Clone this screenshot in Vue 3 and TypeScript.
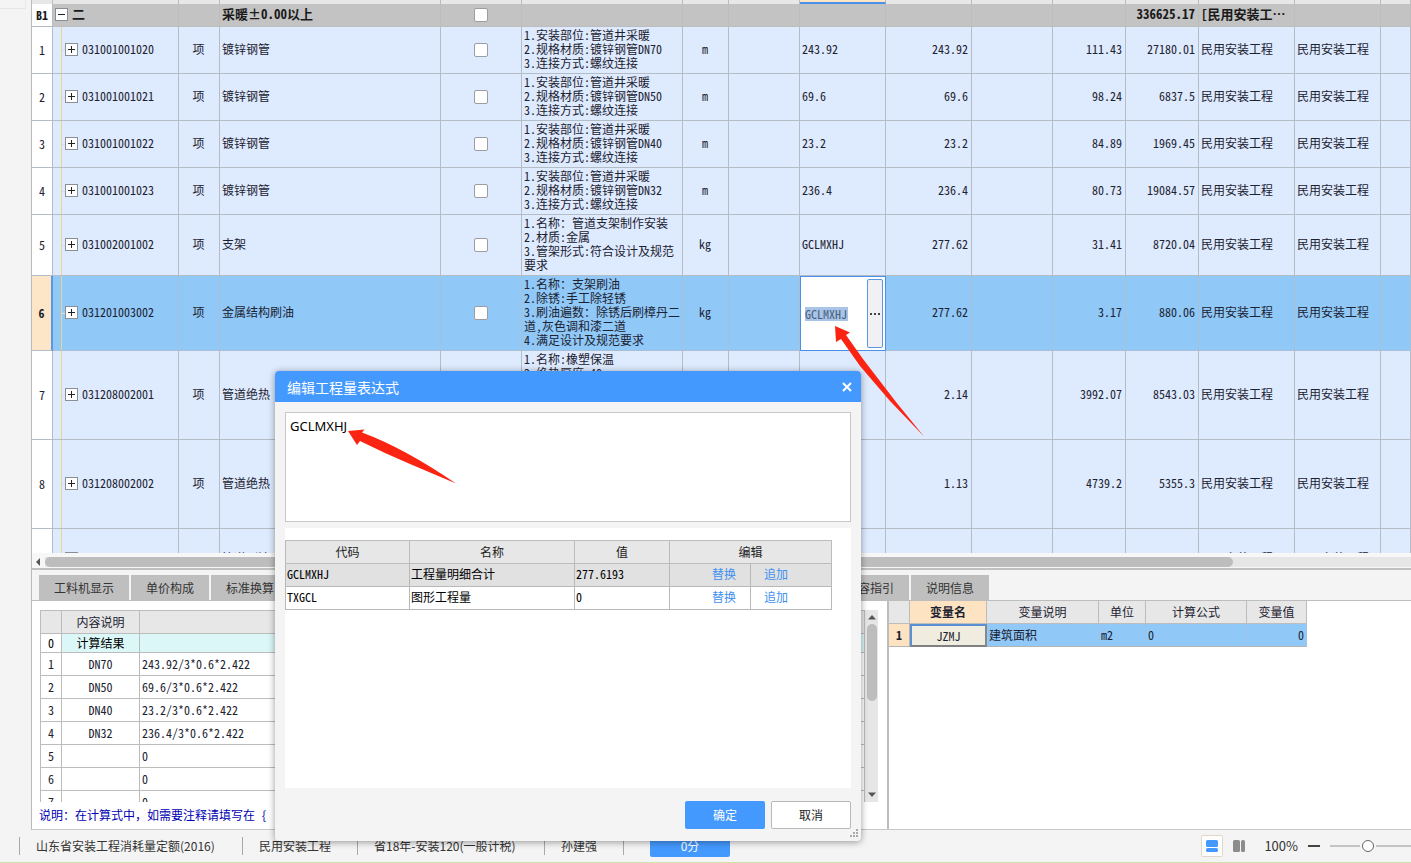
<script setup lang="ts">
import { ref } from 'vue'

interface Item {
  no: string
  code: string
  name: string
  desc: string[]
  unit: string
  expr: string
  qty: string
  price: string
  total: string
  size: string
  active?: boolean
}

const project = '民用安装工程'

const items: Item[] = [
  { no: '1', code: '031001001020', name: '镀锌钢管', desc: ['1.安装部位:管道井采暖', '2.规格材质:镀锌钢管DN70', '3.连接方式:螺纹连接'], unit: 'm', expr: '243.92', qty: '243.92', price: '111.43', total: '27180.01', size: 'h3' },
  { no: '2', code: '031001001021', name: '镀锌钢管', desc: ['1.安装部位:管道井采暖', '2.规格材质:镀锌钢管DN50', '3.连接方式:螺纹连接'], unit: 'm', expr: '69.6', qty: '69.6', price: '98.24', total: '6837.5', size: 'h3' },
  { no: '3', code: '031001001022', name: '镀锌钢管', desc: ['1.安装部位:管道井采暖', '2.规格材质:镀锌钢管DN40', '3.连接方式:螺纹连接'], unit: 'm', expr: '23.2', qty: '23.2', price: '84.89', total: '1969.45', size: 'h3' },
  { no: '4', code: '031001001023', name: '镀锌钢管', desc: ['1.安装部位:管道井采暖', '2.规格材质:镀锌钢管DN32', '3.连接方式:螺纹连接'], unit: 'm', expr: '236.4', qty: '236.4', price: '80.73', total: '19084.57', size: 'h3' },
  { no: '5', code: '031002001002', name: '支架', desc: ['1.名称：管道支架制作安装', '2.材质:金属', '3.管架形式:符合设计及规范', '要求'], unit: 'kg', expr: 'GCLMXHJ', qty: '277.62', price: '31.41', total: '8720.04', size: 'h4' },
  { no: '6', code: '031201003002', name: '金属结构刷油', desc: ['1.名称：支架刷油', '2.除锈:手工除轻锈', '3.刷油遍数：除锈后刷樟丹二', '道,灰色调和漆二道', '4.满足设计及规范要求'], unit: 'kg', expr: 'GCLMXHJ', qty: '277.62', price: '3.17', total: '880.06', size: 'h5', active: true },
  { no: '7', code: '031208002001', name: '管道绝热', desc: ['1.名称:橡塑保温', '2.绝热厚度:40'], unit: '', expr: '', qty: '2.14', price: '3992.07', total: '8543.03', size: 'h6' },
  { no: '8', code: '031208002002', name: '管道绝热', desc: [], unit: '', expr: '', qty: '1.13', price: '4739.2', total: '5355.3', size: 'h6' },
  { no: '', code: '', name: '管道刷油', desc: [], unit: '', expr: '', qty: '', price: '', total: '', size: 'h4' },
]

const calcRows = [
  ['1', 'DN70', '243.92/3*0.6*2.422'],
  ['2', 'DN50', '69.6/3*0.6*2.422'],
  ['3', 'DN40', '23.2/3*0.6*2.422'],
  ['4', 'DN32', '236.4/3*0.6*2.422'],
  ['5', '', '0'],
  ['6', '', '0'],
  ['7', '', '0'],
]

const codes = [
  { code: 'GCLMXHJ', name: '工程量明细合计', value: '277.6193' },
  { code: 'TXGCL', name: '图形工程量', value: '0' },
]

const expression = ref('GCLMXHJ')
const cellExpr = ref('GCLMXHJ')
const zoom = ref(46)
</script>

<template>
  <div class="app">
    <div class="main">
      <aside class="rail"><i></i></aside>
      <div class="work">
        <section class="top">
          <div class="sheet">
            <table class="grid">
              <colgroup>
                <col class="w21"><col class="w126"><col class="w41"><col class="w221"><col class="w81"><col class="w161"><col class="w46"><col class="w71"><col class="w86"><col class="w86"><col class="w81"><col class="w73"><col class="w73"><col class="w96"><col class="w86"><col>
              </colgroup>
              <thead>
                <tr><th v-for="n in 16" :key="n" :class="{ cur: n === 9 }"></th></tr>
              </thead>
              <tbody>
                <tr class="group">
                  <th>B1</th>
                  <td class="tree"><button class="tog" aria-label="收起"><svg viewBox="0 0 13 13"><rect x=".5" y=".5" width="12" height="12" /><path d="M3 6.5h7" /></svg></button>二</td>
                  <td></td>
                  <td>采暖±0.00以上</td>
                  <td class="c tick"><input type="checkbox" aria-label="B1"></td>
                  <td></td><td></td><td></td><td></td><td></td><td></td><td></td>
                  <td class="r">336625.17</td>
                  <td>[民用安装工…</td>
                  <td></td><td></td>
                </tr>
                <tr v-for="(it, i) in items" :key="i" :class="[it.size, { active: it.active }]">
                  <th>{{ it.no }}</th>
                  <td class="tree sub"><button class="tog" aria-label="展开"><svg viewBox="0 0 13 13"><rect x=".5" y=".5" width="12" height="12" /><path d="M3 6.5h7M6.5 3v7" /></svg></button>{{ it.code }}</td>
                  <td class="c">项</td>
                  <td>{{ it.name }}</td>
                  <td class="c tick"><input type="checkbox" :aria-label="it.name"></td>
                  <td class="desc"><div v-for="d in it.desc" :key="d">{{ d }}</div></td>
                  <td class="c">{{ it.unit }}</td>
                  <td></td>
                  <td v-if="it.active" class="edit">
                    <div class="editor"><input v-model="cellExpr" class="expr" aria-label="工程量表达式"><button class="more" aria-label="更多"><i></i><i></i><i></i></button></div>
                  </td>
                  <td v-else>{{ it.expr }}</td>
                  <td class="r">{{ it.qty }}</td>
                  <td></td>
                  <td class="r">{{ it.price }}</td>
                  <td class="r">{{ it.total }}</td>
                  <td>{{ project }}</td>
                  <td>{{ project }}</td>
                  <td></td>
                </tr>
              </tbody>
            </table>
          </div>
          <div class="hbar"><svg viewBox="0 0 6 10"><path d="M5 1v8L1 5z" /></svg><div class="track"><span></span></div></div>
        </section>

        <section class="bottom">
          <nav class="tabs">
            <div class="tabset first"><button>工料机显示</button><button>单价构成</button><button>标准换算</button></div>
            <div class="tabset"><button>内容指引</button><button>说明信息</button></div>
          </nav>
          <div class="panes">
            <div class="calc">
              <div class="calcbody">
                <div class="calcscroll">
                  <table class="grid small">
                    <colgroup><col class="w21"><col class="w78"><col></colgroup>
                    <thead><tr><th></th><th>内容说明</th><th></th></tr></thead>
                    <tbody>
                      <tr class="result"><th>0</th><td class="c">计算结果</td><td></td></tr>
                      <tr v-for="r in calcRows" :key="r[0]"><th>{{ r[0] }}</th><td class="c">{{ r[1] }}</td><td>{{ r[2] }}</td></tr>
                    </tbody>
                  </table>
                </div>
                <div class="vbar"><svg viewBox="0 0 10 6"><path d="M1 5.500h8L5 1z" /></svg><span></span><svg viewBox="0 0 10 6"><path d="M1 .5h8L5 5z" /></svg></div>
              </div>
              <p class="note">说明：在计算式中，如需要注释请填写在 {</p>
            </div>
            <div class="vars">
              <table class="grid vartable">
                <colgroup><col class="w21"><col class="w77"><col class="w112"><col class="w47"><col class="w101"><col class="w60"></colgroup>
                <thead><tr><th></th><th class="cur">变量名</th><th>变量说明</th><th>单位</th><th>计算公式</th><th>变量值</th></tr></thead>
                <tbody><tr><th>1</th><td class="c focus">JZMJ</td><td>建筑面积</td><td>m2</td><td>0</td><td class="r">0</td></tr></tbody>
              </table>
            </div>
          </div>
        </section>
      </div>
    </div>

    <footer class="status">
      <span class="s1">山东省安装工程消耗量定额(2016)</span>
      <span class="s2">民用安装工程</span>
      <span class="s3">省18年-安装120(一般计税)</span>
      <span class="s4">孙建强</span>
      <span class="s5"></span>
      <button class="score">0分</button>
      <div class="tools">
        <button class="view on" aria-label="上下布局"><svg viewBox="0 0 12 12"><rect width="12" height="7" rx="1.500" /><rect y="8" width="12" height="4" rx="1.500" /></svg></button>
        <button class="view" aria-label="左右布局"><svg viewBox="0 0 12 12"><rect width="7" height="12" rx="1.500" /><rect x="8" width="4" height="12" rx="1.500" /></svg></button>
        <span class="pct">100%</span>
        <button class="minus" aria-label="缩小"><i></i></button>
        <input v-model="zoom" type="range" min="0" max="100" aria-label="缩放">
      </div>
    </footer>

    <div class="dialog" role="dialog" aria-labelledby="dlg-title">
      <header>
        <h2 id="dlg-title">编辑工程量表达式</h2>
        <button class="close" aria-label="关闭"><svg viewBox="0 0 10 10"><path d="M1 1l8 8M9 1L1 9" /></svg></button>
      </header>
      <textarea v-model="expression" aria-label="表达式" spellcheck="false"></textarea>
      <div class="list">
        <table class="grid codes">
          <colgroup><col class="w124"><col class="w165"><col class="w95"><col class="w81"><col class="w81"></colgroup>
          <thead><tr><th>代码</th><th>名称</th><th>值</th><th colspan="2">编辑</th></tr></thead>
          <tbody>
            <tr v-for="c in codes" :key="c.code">
              <td>{{ c.code }}</td><td>{{ c.name }}</td><td>{{ c.value }}</td>
              <td class="rep"><a href="#">替换</a></td><td class="add"><a href="#">追加</a></td>
            </tr>
          </tbody>
        </table>
      </div>
      <div class="actions"><button class="ok">确定</button><button class="cancel">取消</button></div>
      <svg class="grip" viewBox="0 0 8 8"><path d="M6 0h2v2H6zM3 3h2v2H3zM6 3h2v2H6zM0 6h2v2H0zM3 6h2v2H3zM6 6h2v2H6z" /></svg>
    </div>

    <svg class="arrow a1" viewBox="0 0 92 114"><path d="M1 1L16 7.500L12 10L29 34L62 77L90 111.500L56 76L26 41L7 14L2 17Z" /></svg>
    <svg class="arrow a2" viewBox="0 0 112 58"><path d="M2 3L18.500 1.500L16 4.500Q58 20 110 55.500L64 36L39 25L14 13L11 17Z" /></svg>
  </div>
</template>

<style>
html, body { margin: 0; overflow: hidden; }
</style>

<style scoped>
.app {
  position: relative;
  display: flex;
  flex-direction: column;
  height: 100vh;
  background: #f4f4f4;
  color: #1c2230;
  font: 12px/14px "Noto Sans Mono CJK SC", "Noto Sans CJK SC", monospace;
  overflow: hidden;
}
.app * { box-sizing: border-box; }
button, input, textarea { font: inherit; color: inherit; margin: 0; padding: 0; }
button { border: 0; background: none; }
.main { flex: 1; min-height: 0; display: flex; }
.rail { flex: 0 0 32px; border-right: 1px solid #b8bcc0; }
.rail i { display: block; width: 26px; height: 9px; border-right: 1px solid #e9e9e9; border-bottom: 1px solid #e4e4e4; }
.work { flex: 1; min-width: 0; display: flex; flex-direction: column; }
.top { flex: 1; min-height: 0; display: flex; flex-direction: column; border-bottom: 2px solid #c0c0c0; }
.sheet { flex: 1; min-height: 0; overflow: hidden; background: #fff; }

.grid { border-collapse: separate; border-spacing: 0; table-layout: fixed; width: 100%; }
.grid th, .grid td { padding: 0 2px; border: 0 solid #b4bcc6; border-width: 0 1px 1px 0; text-align: left; white-space: nowrap; overflow: hidden; }
.grid th { text-align: center; font-weight: 400; }
.grid thead th { background: #e7e7e7; border-color: #bcbcbc; }
.grid .c { text-align: center; }
.grid .r { text-align: right; }
.sheet thead th { height: 4px; padding: 0; border-bottom: 0; }
.sheet thead .cur { background: #fde6c4; border-bottom: 2px solid #4a90e8; }
.sheet tbody th { background: #fff; padding: 0; }
.sheet tbody td { padding: 0 3px 2px 2px; background-color: #deeafe; }
.sheet .group th, .sheet .group td { height: 23px; font-weight: 700; color: #1a1a1a; }
.sheet .group td { background: #c3c3c3; border-color: #bdbdbd; font-size: 13px; }
.sheet tbody .tick { padding: 0; }
.h3 td { height: 47px; }
.h4 td { height: 61px; }
.h5 td { height: 75px; }
.h6 td { height: 89px; }
.sheet tbody .desc { vertical-align: top; padding: 1px 0 0 2px; }
.sheet tbody .sub { padding-left: 12px; background-image: linear-gradient(#ecd48c, #ecd48c), linear-gradient(#dfe0dc, #dfe0dc); background-size: 1px 100%, 4px 1px; background-position: 8px 0, 8px 50%; background-repeat: no-repeat; }
.tog { width: 13px; height: 13px; margin-right: 4px; vertical-align: -2px; }
.tog svg { display: block; width: 13px; height: 13px; fill: #fff; stroke: #8a8f96; }
.tog path { stroke: #222; }
.sheet input[type="checkbox"] { appearance: none; display: block; width: 14px; height: 14px; margin: 0 auto; border: 1px solid #9a9da2; border-radius: 2px; background: #fff; }
.sheet .active td { background-color: #90c8f8; border-color: #a9c0d4; }
.sheet .active th { background: #fde6c8; font-weight: 700; border-right: 2px solid #5a98e4; }
.sheet .active .edit { padding: 0; background: #fff; border: 1px solid #4a90e8; }
.editor { display: flex; height: 73px; padding: 2px 2px 2px 4px; align-items: stretch; }
.expr { flex: 1; min-width: 0; align-self: center; height: 14px; border: 0; width: 42px; margin-right: 19px; background: #a9c4e6; color: #47617f; outline: 0; }
.more { flex: 0 0 16px; display: flex; align-items: center; justify-content: center; gap: 2px; border: 1px solid #5a98e4; border-radius: 2px; background: #f1f1f4; }
.more i { width: 2px; height: 2px; background: #444; }

.hbar { flex: 0 0 15px; display: flex; align-items: center; gap: 4px; padding: 2px 0 0 3px; background: #f7f7f7; }
.hbar svg { width: 6px; height: 10px; fill: #555; }
.hbar .track { flex: 1; background: #e6e6e6; }
.hbar .track span { display: block; width: 87%; height: 10px; border-radius: 5px; background: #bdbdbd; }

.bottom { flex: 0 0 260px; min-height: 0; display: flex; flex-direction: column; border-bottom: 1px solid #c8c8c8; }
.tabs { flex: 0 0 31px; display: flex; align-items: flex-end; padding-left: 7px; border-bottom: 1px solid #bdbdbd; }
.tabset { display: flex; gap: 2px; }
.tabset.first { flex: 0 0 792px; }
.tabs button { height: 25px; padding: 0 15px; background: #bfbfbf; color: #333; font-family: "Noto Sans CJK SC", sans-serif; }
.panes { flex: 1; min-height: 0; display: grid; grid-template-columns: 857fr 522fr; grid-template-rows: minmax(0, 1fr); background: #fff; }
.calc { min-width: 0; min-height: 0; display: flex; flex-direction: column; padding: 9px 9px 0 8px; border-right: 2px solid #bdbdbd; }
.calcbody { flex: 0 0 192px; min-height: 0; display: flex; }
.calcscroll { flex: 1; overflow: hidden; border-left: 1px solid #bcbcbc; }
.small th, .small td { height: 23px; border-color: #bcbcbc; }
.small thead th { border-top: 1px solid #bcbcbc; height: 24px; }
.small .result th, .small .result td { height: 19px; color: #000; }
.small .result td { background: #dcf7f7; }
.vbar { width: 13px; display: flex; flex-direction: column; align-items: center; padding: 4px 0; background: #e6e6e6; }
.vbar svg { width: 10px; height: 6px; fill: #555; }
.vbar span { width: 10px; height: 77px; margin: 4px 0 auto; border-radius: 5px; background: #bdbdbd; }
.note { margin: 6px 0 0 -1px; color: #0000b4; }
.vartable { width: 418px; }
.vartable th, .vartable td { height: 23px; border-color: #b4b4b4; }
.vartable thead .cur { background: #fde3c2; font-weight: 700; }
.vartable tbody td { background: #90c8f8; border-right-color: #9cc4ea; }
.vartable tbody th { background: #fde3c2; font-weight: 700; }
.vartable tbody .focus { background: #f0ede0; border: 2px solid #5a8fd4; border-right-color: #888; border-bottom-color: #808080; }

.status { flex: 0 0 33px; display: flex; align-items: center; padding-left: 19px; border-bottom: 1px solid #cfe4a8; font-family: "Noto Sans CJK SC", sans-serif; color: #333; overflow: hidden; }
.status span { white-space: nowrap; }
.status > span { height: 18px; line-height: 18px; border-left: 1px solid #a8a8a8; padding-left: 16px; }
.s1 { flex: 0 0 223px; }
.s2 { flex: 0 0 115px; }
.s3 { flex: 0 0 187px; }
.s4 { flex: 0 0 79px; }
.s5 { flex: 0 0 27px; }
.score { width: 80px; height: 22px; border-radius: 2px; background: #4499fe; color: #fff; }
.tools { flex: 1; display: flex; align-items: center; justify-content: flex-end; }
.view { width: 22px; height: 22px; display: flex; align-items: center; justify-content: center; fill: #8c8c8c; }
.view.on { margin-right: 5px; border: 1px solid #e2d8c8; border-radius: 2px; background: #fff; fill: #4499fe; }
.view svg { width: 12px; height: 12px; }
.pct { margin: 0 10px 0 14px; font-size: 13px; }
.minus { width: 12px; height: 12px; display: flex; align-items: center; }
.minus i { width: 12px; height: 2px; background: #444; }
.tools input { appearance: none; width: 81px; height: 16px; margin-left: 10px; background: linear-gradient(#c4c4c4, #c4c4c4) center / 100% 2px no-repeat; }
.tools input::-webkit-slider-thumb { appearance: none; width: 12px; height: 12px; border: 1px solid #666; border-radius: 50%; background: #fff; box-shadow: 0 0 0 2px #f4f4f4; }

.dialog { position: absolute; left: 275px; top: 371px; width: 586px; display: flex; flex-direction: column; padding: 0 10px 12px; border-radius: 4px; background: #f4f4f4; box-shadow: 0 1px 7px rgba(0, 0, 0, .4); color: #000; }
.dialog header { display: flex; align-items: center; justify-content: space-between; height: 31px; margin: 0 -10px; padding: 0 9px 0 12px; border-radius: 4px 4px 0 0; background: #4499fe; color: #fff; }
.dialog h2 { margin: 0; font: 400 14px/20px "Noto Sans CJK SC", sans-serif; }
.close { width: 10px; height: 10px; }
.close svg { display: block; width: 10px; height: 10px; fill: none; stroke: #fff; stroke-width: 2; }
.dialog textarea { display: block; height: 110px; margin-top: 10px; padding: 4px; border: 1px solid #c8c8c8; border-radius: 0; resize: none; outline: 0; background: #fff; font: 13px/18px "Noto Sans", "Noto Sans CJK SC", sans-serif; }
.list { height: 260px; margin-top: 6px; padding-top: 12px; background: #fff; }
.codes { width: 547px; border-left: 1px solid #b8b8b8; }
.codes th, .codes td { height: 23px; border-color: #b8b8b8; }
.codes th { border-top: 1px solid #b8b8b8; height: 24px; color: #222; }
.codes td { padding: 0 2px 2px 1px; }
.codes tbody tr:first-child td { background: #e1e1e1; }
.codes a { color: #4090f0; text-decoration: none; }
.codes .rep { text-align: right; padding-right: 14px; }
.codes .add { padding-left: 13px; }
.actions { display: flex; justify-content: flex-end; gap: 6px; margin-top: 13px; font-family: "Noto Sans CJK SC", sans-serif; }
.actions button { width: 80px; height: 28px; border-radius: 2px; }
.ok { background: #4499fe; color: #fff; }
.actions .cancel { border: 1px solid #b8b8b8; background: #fff; color: #222; }
.grip { position: absolute; right: 3px; bottom: 4px; width: 8px; height: 8px; fill: #aaa; }

.arrow { position: absolute; pointer-events: none; fill: #fb2413; }
.a1 { left: 834px; top: 325px; width: 92px; height: 114px; }
.a2 { left: 346px; top: 428px; width: 112px; height: 58px; }

.w21 { width: 21px; }
.w41 { width: 41px; }
.w46 { width: 46px; }
.w47 { width: 47px; }
.w60 { width: 60px; }
.w71 { width: 71px; }
.w73 { width: 73px; }
.w77 { width: 77px; }
.w78 { width: 78px; }
.w81 { width: 81px; }
.w86 { width: 86px; }
.w95 { width: 95px; }
.w96 { width: 96px; }
.w101 { width: 101px; }
.w112 { width: 112px; }
.w124 { width: 124px; }
.w126 { width: 126px; }
.w161 { width: 161px; }
.w165 { width: 165px; }
.w221 { width: 221px; }
</style>
